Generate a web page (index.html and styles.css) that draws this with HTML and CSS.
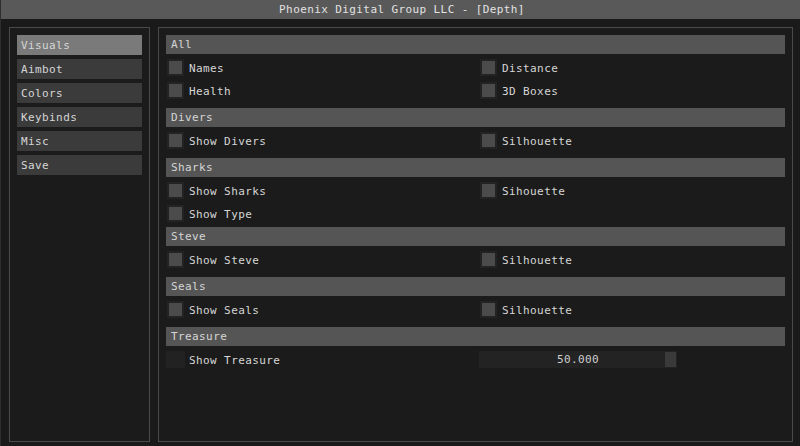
FILE: index.html
```html
<!DOCTYPE html>
<html lang="en">
<head>
  <meta charset="UTF-8" />
  <title>Phoenix Digital Group LLC - [Depth]</title>
  <link rel="stylesheet" href="styles.css">
</head>
<body>
  <div class="window">
    <div class="titlebar">Phoenix Digital Group LLC - [Depth]</div>

    <div class="main">
      <div class="panel sidebar">
        <div class="tab active">Visuals</div>
        <div class="tab">Aimbot</div>
        <div class="tab">Colors</div>
        <div class="tab">Keybinds</div>
        <div class="tab">Misc</div>
        <div class="tab">Save</div>
      </div>

      <div class="panel content">
        <div class="section">
          <div class="header">All</div>
          <div class="row">
            <label class="check"><span class="box"></span><span class="text">Names</span></label>
            <label class="check"><span class="box"></span><span class="text">Distance</span></label>
          </div>
          <div class="row">
            <label class="check"><span class="box"></span><span class="text">Health</span></label>
            <label class="check"><span class="box"></span><span class="text">3D Boxes</span></label>
          </div>
        </div>

        <div class="section">
          <div class="header">Divers</div>
          <div class="row">
            <label class="check"><span class="box"></span><span class="text">Show Divers</span></label>
            <label class="check"><span class="box"></span><span class="text">Silhouette</span></label>
          </div>
        </div>

        <div class="section">
          <div class="header">Sharks</div>
          <div class="row">
            <label class="check"><span class="box"></span><span class="text">Show Sharks</span></label>
            <label class="check"><span class="box"></span><span class="text">Sihouette</span></label>
          </div>
          <div class="row">
            <label class="check"><span class="box"></span><span class="text">Show Type</span></label>
          </div>
        </div>

        <div class="section tight">
          <div class="header">Steve</div>
          <div class="row">
            <label class="check"><span class="box"></span><span class="text">Show Steve</span></label>
            <label class="check"><span class="box"></span><span class="text">Silhouette</span></label>
          </div>
        </div>

        <div class="section">
          <div class="header">Seals</div>
          <div class="row">
            <label class="check"><span class="box"></span><span class="text">Show Seals</span></label>
            <label class="check"><span class="box"></span><span class="text">Silhouette</span></label>
          </div>
        </div>

        <div class="section">
          <div class="header">Treasure</div>
          <div class="row">
            <label class="check"><span class="box empty"></span><span class="text">Show Treasure</span></label>
            <div class="slider">
              <span class="value">50.000</span>
              <span class="grab"></span>
            </div>
          </div>
        </div>
      </div>
    </div>
  </div>
</body>
</html>
```

FILE: styles.css
```css
* { box-sizing: border-box; }
body {
  margin: 0;
  background: #1a1a1a;
  color: #d6d6d6;
  font-family: 'DejaVu Sans Mono', 'Liberation Mono', monospace;
  font-size: 11px;
  letter-spacing: 0.4px;
}
.window {
  width: 800px;
  height: 446px;
  border-left: 1px solid #2e2e2e;
  display: flex;
  flex-direction: column;
}
.titlebar {
  height: 19px;
  line-height: 20px;
  background: #595959;
  color: #e2e2e2;
  text-align: center;
  padding-left: 3px;
}
.main {
  flex: 1;
  display: flex;
  gap: 8px;
  padding: 8px 7px 4px 8px;
}
.panel {
  border: 1px solid #4a4a4a;
  background: #1b1b1b;
  padding: 7px;
}
.sidebar {
  width: 141px;
  display: flex;
  flex-direction: column;
  gap: 4px;
}
.tab {
  height: 20px;
  line-height: 21px;
  padding-left: 4px;
  background: #3b3b3b;
}
.tab.active { background: #7a7a7a; }
.content {
  flex: 1;
  display: flex;
  flex-direction: column;
  gap: 8px;
}
.section {
  display: flex;
  flex-direction: column;
  gap: 4px;
}
.section.tight { margin-top: -4px; }
.header {
  height: 19px;
  line-height: 20px;
  padding-left: 5px;
  background: #555555;
}
.row {
  height: 19px;
  display: grid;
  grid-template-columns: 313px 1fr;
  padding-left: 3px;
  align-items: center;
}
.check {
  display: flex;
  align-items: center;
  gap: 7px;
}
.text { padding-top: 2px; }
.box {
  width: 13px;
  height: 13px;
  background: #4b4b4b;
  box-shadow: 0 0 0 2px #232323;
}
.box.empty {
  width: 19px;
  height: 17px;
  margin-left: -3px;
  margin-right: -3px;
  background: #222222;
  box-shadow: none;
}
.slider {
  position: relative;
  width: 198px;
  height: 17px;
  margin-left: -3px;
  background: #232323;
  text-align: center;
  line-height: 18px;
  color: #cfcfcf;
}
.grab {
  position: absolute;
  top: 1px;
  right: 1px;
  width: 11px;
  height: 15px;
  background: #3a3a3a;
}
```
